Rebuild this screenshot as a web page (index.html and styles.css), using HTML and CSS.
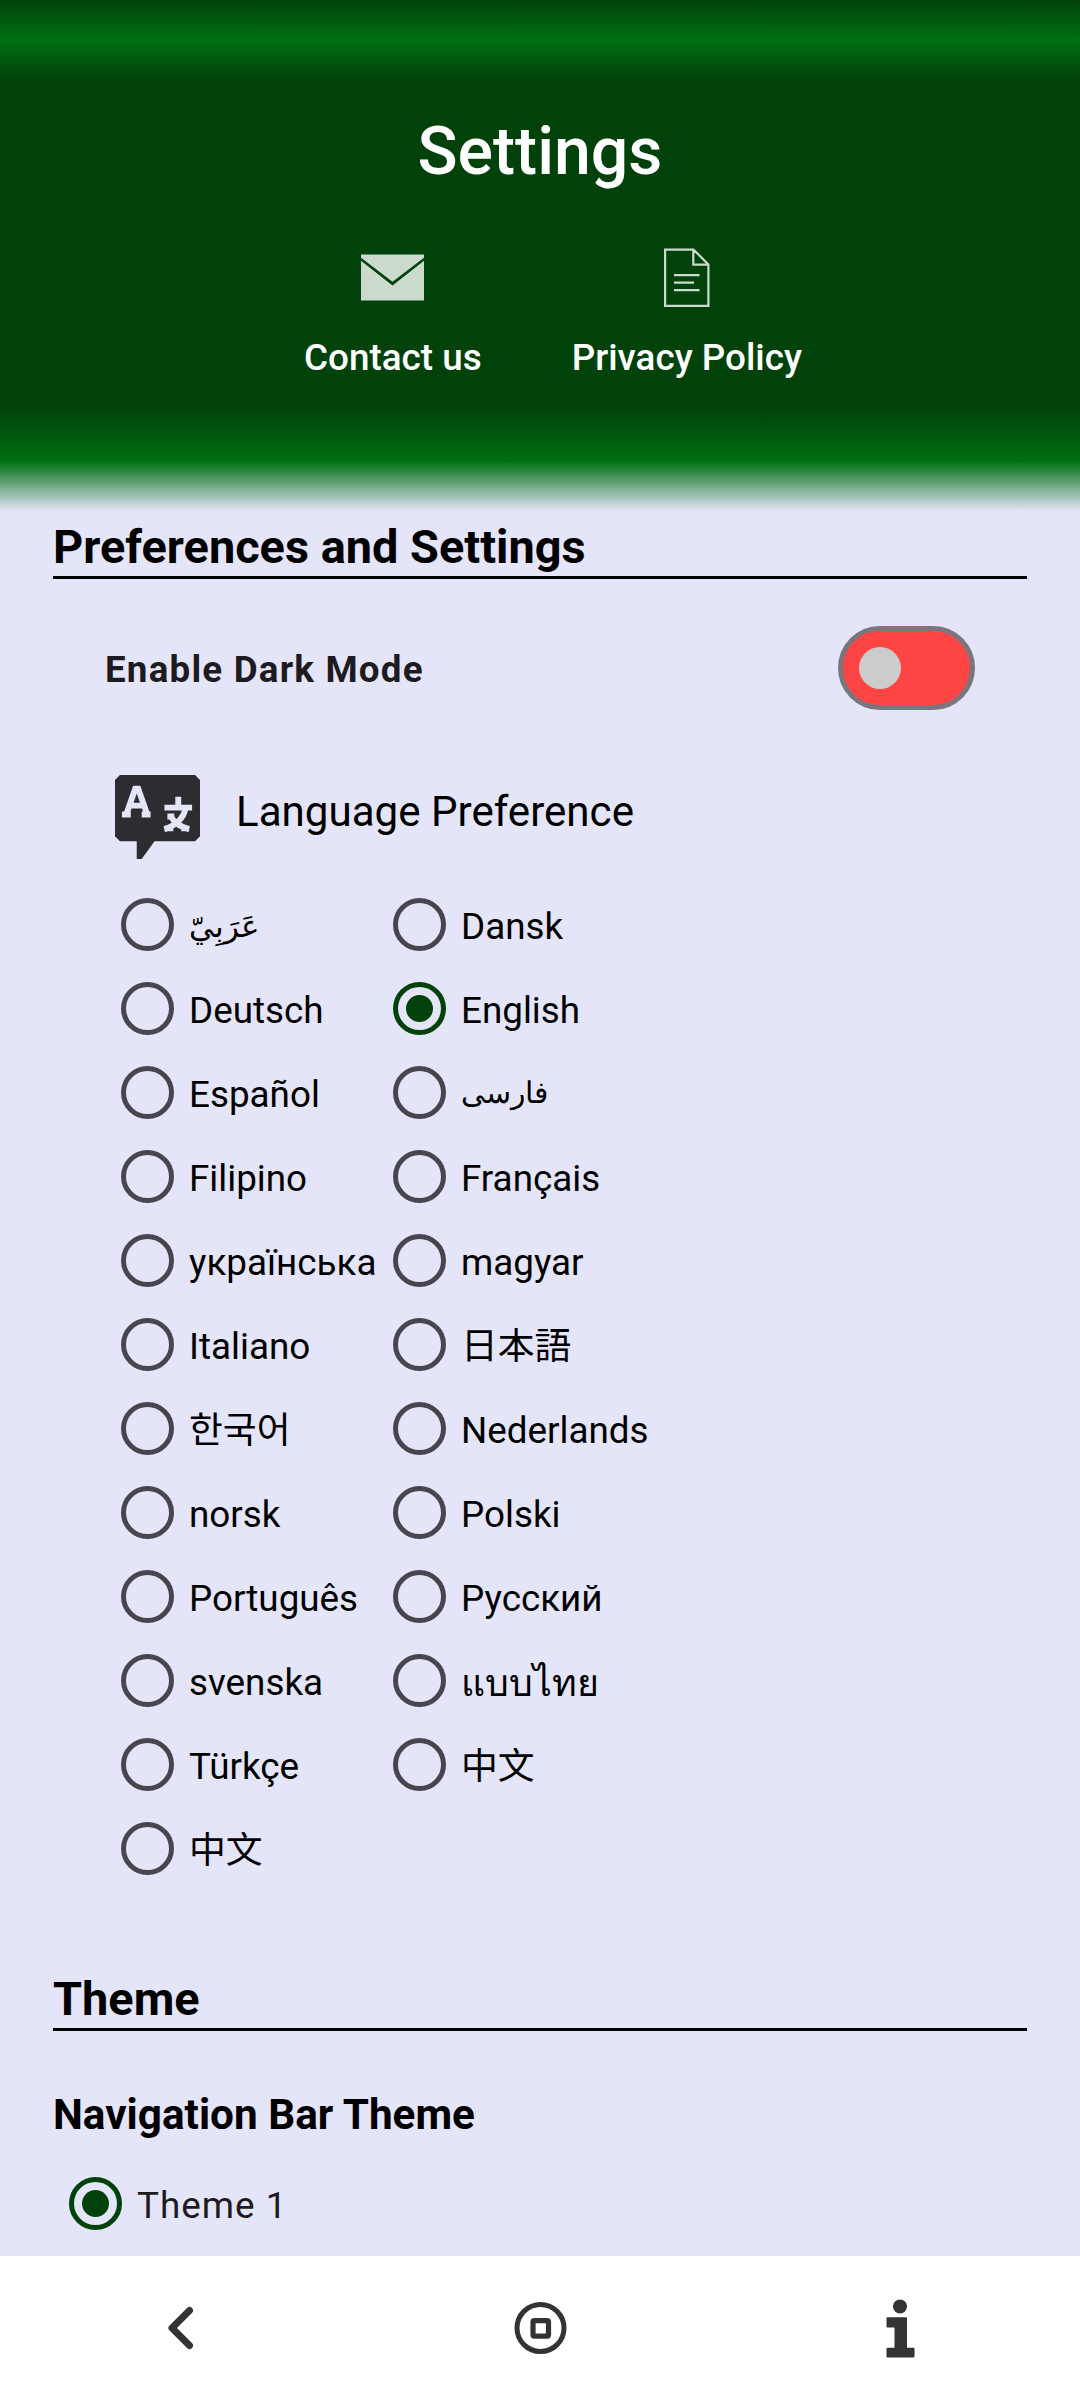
FILE: index.html
```html
<!DOCTYPE html>
<html lang="en">
<head>
<meta charset="utf-8">
<title>Settings</title>
<link rel="stylesheet" href="styles.css">
</head>
<body>
<div class="screen">
  <header class="header">
    <h1 class="title">Settings</h1>
    <div class="links">
      <a class="link">
        <svg class="link-icon" width="64" height="64" viewBox="0 0 64 64"><path fill="#ccdacd" d="M0 9.500h63v3.200L31.500 36.800 0 12.700zM0 15.800 31.500 40.600l31.500-24.800V55.500H0z"/></svg>
        <span>Contact us</span>
      </a>
      <a class="link">
        <svg class="link-icon" width="64" height="64" viewBox="0 0 64 64" fill="none" stroke="#ccdacd" stroke-width="2.200"><path d="M10.100 4.600h28.400L53.400 19.400V60.900H10.100zM38.300 5v14.600H53M19 30.200h25.500M19 37.700h20M19 45.200h25.500"/></svg>
        <span>Privacy Policy</span>
      </a>
    </div>
  </header>

  <main class="content">
    <h2 class="section-title">Preferences and Settings</h2>
    <div class="dark-row">
      <span class="dark-label">Enable Dark Mode</span>
      <span class="toggle"><span class="thumb"></span></span>
    </div>
    <div class="lang-head">
      <svg width="85" height="85" viewBox="0 0 86 86"><path fill="#2d2c31" d="M5 0H81L86 5V62L81 67H40L27 85H22V67H5L0 62V5z"/><path fill="none" stroke="#e5e5fa" stroke-width="6" d="M11 41 20.500 14h3L33 41M15 31h14M7 40h9M27 40h9"/><path fill="none" stroke="#e5e5fa" stroke-width="6" d="M64 22v9M50 33h28M71 35c-2 9-10 16-21 20M56 41c4 8 10 11 19 14M53 42h7M50 54h9M67 54h8"/></svg>
      <span>Language Preference</span>
    </div>
    <div class="languages">
      <label class="option"><i class="radio"></i><span class="text arabic" lang="ar">عَرَبِيّ</span></label>
      <label class="option"><i class="radio"></i><span class="text">Dansk</span></label>
      <label class="option"><i class="radio"></i><span class="text">Deutsch</span></label>
      <label class="option"><i class="radio on"></i><span class="text">English</span></label>
      <label class="option"><i class="radio"></i><span class="text">Español</span></label>
      <label class="option"><i class="radio"></i><span class="text persian" lang="fa">فارسی</span></label>
      <label class="option"><i class="radio"></i><span class="text">Filipino</span></label>
      <label class="option"><i class="radio"></i><span class="text">Français</span></label>
      <label class="option"><i class="radio"></i><span class="text">українська</span></label>
      <label class="option"><i class="radio"></i><span class="text">magyar</span></label>
      <label class="option"><i class="radio"></i><span class="text">Italiano</span></label>
      <label class="option"><i class="radio"></i><span class="text cjk" lang="ja">日本語</span></label>
      <label class="option"><i class="radio"></i><span class="text korean" lang="ko">한국어</span></label>
      <label class="option"><i class="radio"></i><span class="text">Nederlands</span></label>
      <label class="option"><i class="radio"></i><span class="text">norsk</span></label>
      <label class="option"><i class="radio"></i><span class="text">Polski</span></label>
      <label class="option"><i class="radio"></i><span class="text">Português</span></label>
      <label class="option"><i class="radio"></i><span class="text">Русский</span></label>
      <label class="option"><i class="radio"></i><span class="text">svenska</span></label>
      <label class="option"><i class="radio"></i><span class="text thai" lang="th">แบบไทย</span></label>
      <label class="option"><i class="radio"></i><span class="text">Türkçe</span></label>
      <label class="option"><i class="radio"></i><span class="text cjk" lang="zh">中文</span></label>
      <label class="option"><i class="radio"></i><span class="text cjk" lang="zh">中文</span></label>
    </div>
    <h2 class="section-title">Theme</h2>
    <h3 class="sub-title">Navigation Bar Theme</h3>
    <label class="option theme-option"><i class="radio on"></i><span class="text">Theme 1</span></label>
  </main>

  <nav class="navbar">
    <svg width="60" height="60" viewBox="0 0 60 60"><path d="M39.500 12.500 22 30l17.500 17.500" fill="none" stroke="#333" stroke-width="7" stroke-linecap="round" stroke-linejoin="round"/></svg>
    <svg width="60" height="60" viewBox="0 0 60 60" fill="none" stroke="#333"><circle cx="30.500" cy="30" r="23.500" stroke-width="5"/><rect x="23" y="22.700" width="15.500" height="15.500" rx="1.500" stroke-width="5.200"/></svg>
    <svg width="60" height="60" viewBox="0 0 60 60" fill="#333"><circle cx="30" cy="8.500" r="7"/><path d="M17.500 19.300h18.500q1 0 1 1V49.700h6.500q1 0 1 1V58.500q0 1-1 1H17.500q-1 0-1-1V50.700q0-1 1-1H24.500V29.500H17.500q-1 0-1-1V20.300q0-1 1-1z"/></svg>
  </nav>
</div>
</body>
</html>
```
FILE: styles.css
```css
* { box-sizing: border-box; }
body {
  margin: 0;
  background: #e5e5fa;
  color: #000;
  font-family: Roboto, "Noto Sans", "Noto Sans CJK SC", sans-serif;
}
h1, h2, h3 { margin: 0; }
svg { display: block; flex: none; }
.screen {
  display: flex;
  flex-direction: column;
  height: 2400px;
  overflow: hidden;
}
.header {
  height: 512px;
  flex: none;
  padding-top: 112px;
  color: #fff;
  background: linear-gradient(#00420a 0, #007012 40px, #00420a 80px, #00420a 408px, #007012 461px, #e5e5fa 512px);
}
.title {
  font-size: 66.200px;
  line-height: 80px;
  font-weight: 500;
  text-align: center;
}
.links {
  display: flex;
  gap: 90px;
  margin-top: 53px;
  padding-left: 304px;
}
.link {
  display: flex;
  flex-direction: column;
  align-items: center;
  gap: 27px;
  font-size: 36.850px;
  line-height: 44px;
  font-weight: 500;
  white-space: nowrap;
}
.content {
  flex: 1;
  min-height: 0;
  padding: 8px 53px 0;
}
.section-title {
  height: 59px;
  border-bottom: 3px solid #000;
  font-size: 46.900px;
  line-height: 54px;
  font-weight: 700;
}
.dark-row {
  display: flex;
  align-items: center;
  justify-content: space-between;
  height: 84px;
  margin-top: 47px;
  padding: 0 52px;
}
.dark-label {
  padding-top: 4px;
  font-size: 36.750px;
  line-height: 44px;
  font-weight: 700;
  letter-spacing: 1.200px;
  color: #1d1b20;
}
.toggle {
  display: flex;
  align-items: center;
  width: 137px;
  height: 84px;
  padding-left: 16px;
  border: 5px solid #7c757e;
  border-radius: 42px;
  background: #ff4444;
}
.thumb {
  width: 42px;
  height: 42px;
  border-radius: 50%;
  background: #ccc;
}
.lang-head {
  display: flex;
  align-items: center;
  gap: 36px;
  height: 86px;
  margin-top: 64px;
  padding-left: 62px;
  font-size: 42.100px;
  line-height: 50px;
}
.lang-head span { margin-top: -10px; }
.languages {
  display: grid;
  grid-template-columns: 272px 400px;
  grid-auto-rows: 84px;
  margin: 23px 0 81px 67.500px;
}
.option {
  display: flex;
  align-items: center;
  gap: 15.500px;
  height: 84px;
  font-size: 36.800px;
  white-space: nowrap;
}
.text {
  padding-top: 3px;
  line-height: 44px;
}
.cjk { font-family: Roboto, "Noto Sans CJK JP", sans-serif; }
.korean { font-family: Roboto, "Noto Sans CJK KR", sans-serif; }
.arabic { font-size: 30.500px; }
.persian { padding-top: 0; font-size: 30px; }
.thai { font-size: 37.500px; }
.radio {
  display: flex;
  align-items: center;
  justify-content: center;
  width: 53px;
  height: 53px;
  margin-top: -1px;
  border: 5px solid #49454f;
  border-radius: 50%;
}
.radio.on { border-color: #00420a; }
.radio.on::after {
  content: "";
  width: 27px;
  height: 27px;
  border-radius: 50%;
  background: #00420a;
}
.sub-title {
  margin-top: 59px;
  font-size: 42.300px;
  line-height: 50px;
  font-weight: 700;
}
.theme-option {
  margin: 22px 0 0 15.500px;
  letter-spacing: 1px;
  color: #1d1b20;
}
.navbar {
  display: grid;
  grid-template-columns: repeat(3, 1fr);
  justify-items: center;
  height: 144px;
  flex: none;
  padding-top: 42px;
  background: #fff;
}
```
